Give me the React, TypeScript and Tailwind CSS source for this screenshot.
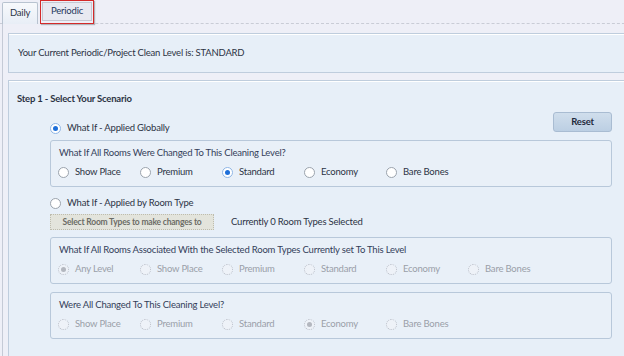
import React from 'react';

type Opt = { label: string; checked?: boolean };

const Radio = ({ checked, disabled }: { checked?: boolean; disabled?: boolean }) => {
  if (disabled) {
    return (
      <span className="flex h-[11px] w-[11px] shrink-0 items-center justify-center rounded-full border border-dotted border-[#b9bec8] bg-[#eef2f8]">
        {checked && <span className="h-[5px] w-[5px] rounded-full bg-[#b3b7bf]" />}
      </span>
    );
  }
  return (
    <span
      className={`flex h-[11px] w-[11px] shrink-0 items-center justify-center rounded-full border bg-white ${
        checked ? 'border-[#8fb6e6]' : 'border-[#9ba3ad]'
      }`}
    >
      {checked && <span className="h-[5px] w-[5px] rounded-full bg-[#1e6fd9]" />}
    </span>
  );
};

const OptionRow = ({ options, disabled }: { options: Opt[]; disabled?: boolean }) => (
  <div className="mt-[5px] flex h-[14px] items-center">
    {options.map((o) => (
      <div key={o.label} className="flex w-[82px] shrink-0 items-center gap-[6px]">
        <Radio checked={o.checked} disabled={disabled} />
        <span className={disabled ? 'text-[#9a9fa8]' : 'text-[#2c3344]'}>{o.label}</span>
      </div>
    ))}
  </div>
);

const LevelBox = ({ title, options, disabled }: { title: string; options: Opt[]; disabled?: boolean }) => (
  <div className="ml-[41px] mr-[15px] h-[47px] rounded-[3px] border border-[#b8c8da] bg-[#e9f0f8] pl-[7px] pt-[5px]">
    <p className="h-[14px] pl-[1px] text-[#34405a]">{title}</p>
    <OptionRow options={options} disabled={disabled} />
  </div>
);

const levels = ['Show Place', 'Premium', 'Standard', 'Economy', 'Bare Bones'];

export default function App() {
  return (
    <div
      className="h-[356px] w-[624px] overflow-hidden whitespace-nowrap bg-[#eeeff7] text-[9.5px] leading-[14px] tracking-[-0.2px] text-[#2c3344]"
      style={{ fontFamily: 'Lato, sans-serif' }}
    >
      {/* tabs */}
      <div className="flex h-[24px] w-[640px] items-end border-b border-dashed border-[#c9ccd6] pl-[2px]">
        <div className="-mb-px flex h-[22px] w-[36px] items-center justify-center rounded-t-[2px] border border-b-0 border-[#b8c3d0] bg-gradient-to-b from-[#f7f9fc] to-[#e8eef6] pb-[2px] text-[#2c3344]">
          Daily
        </div>
        <div className="mb-[-1px] ml-[2px] flex h-[24px] w-[54px] items-center justify-center border border-[#d42a2a] pb-[2px] shadow-[1px_1px_1px_rgba(0,0,0,0.25)]">
          <span className="mt-[1px] flex h-[19px] w-[50px] items-center justify-center border border-[#c5c8d2] bg-[#e8e9f1] pb-[2px] text-[#26365c]">
            Periodic
          </span>
        </div>
      </div>

      {/* body */}
      <div className="ml-[2px] h-[340px] w-[640px] border-l border-[#c5cad6] pl-[5px] pt-[9px]">
        <div className="flex h-[40px] w-[620px] items-center border border-[#bfcddd] bg-[#e7eff8] pl-[9px] shadow-[inset_0_1px_0_#ffffff]">
          Your Current Periodic/Project Clean Level is: STANDARD
        </div>

        <div className="mt-[7px] h-[290px] w-[620px] border border-[#bfcddd] bg-[#e7eff8] pt-[11px] shadow-[inset_0_1px_0_#ffffff]">
          <p className="pl-[8px] font-bold text-[#2c3344]">Step 1 - Select Your Scenario</p>

          <div className="mt-[6px] mr-[15px] flex h-[22px] items-end justify-between">
            <div className="ml-[41px] mb-[-1px] flex items-center gap-[6px]">
              <Radio checked />
              <span>What If - Applied Globally</span>
            </div>
            <button className="mb-[2px] h-[20px] w-[59px] rounded-[3px] border border-[#a9bcd2] bg-gradient-to-b from-[#d0deec] to-[#bccfe3] text-[9.5px] font-bold text-[#1f2a3c]">
              Reset
            </button>
          </div>

          <div className="mt-[6px]">
            <LevelBox
              title="What If All Rooms Were Changed To This Cleaning Level?"
              options={levels.map((l) => ({ label: l, checked: l === 'Standard' }))}
            />
          </div>

          <div className="ml-[41px] mt-[9px] flex h-[14px] items-center gap-[6px]">
            <Radio />
            <span>What If - Applied by Room Type</span>
          </div>

          <div className="ml-[41px] mt-[4px] flex h-[16px] items-center">
            <span className="flex h-[16px] w-[164px] items-center justify-center border border-dotted border-[#bdbcae] bg-[#e3e4dc] text-[8.5px] font-bold text-[#6c6c66]">
              Select Room Types to make changes to
            </span>
            <span className="ml-[17px]">Currently 0 Room Types Selected</span>
          </div>

          <div className="mt-[7px]">
            <LevelBox
              disabled
              title="What If All Rooms Associated With the Selected Room Types Currently set To This Level"
              options={['Any Level', ...levels].map((l) => ({ label: l, checked: l === 'Any Level' }))}
            />
          </div>

          <div className="mt-[8px]">
            <LevelBox
              disabled
              title="Were All Changed To This Cleaning Level?"
              options={levels.map((l) => ({ label: l, checked: l === 'Economy' }))}
            />
          </div>
        </div>
      </div>
    </div>
  );
}
